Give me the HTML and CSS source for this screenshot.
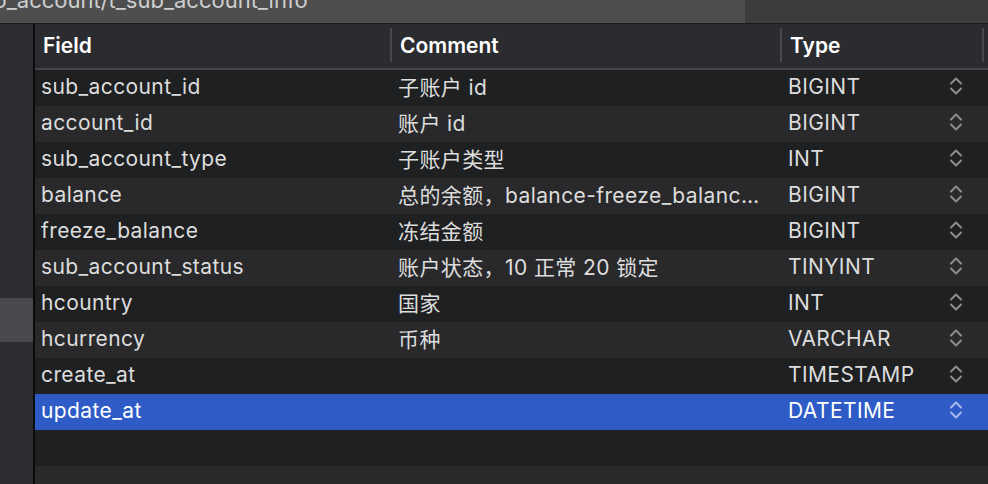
FILE: index.html
```html
<!DOCTYPE html>
<html lang="zh">
<head>
<meta charset="utf-8">
<title>t_sub_account_info</title>
<link rel="stylesheet" href="styles.css">
</head>
<body>
<div class="titlebar">
  <div class="title-left"><span class="title">demo_account/t_sub_account_info</span></div>
  <div class="title-right"></div>
</div>
<div class="main">
  <aside class="sidebar"><div class="side-item"></div></aside>
  <section class="table">
    <div class="thead">
      <div class="th th-first">Field</div>
      <div class="th">Comment</div>
      <div class="th">Type</div>
      <div class="th"></div>
    </div>
    <div class="row odd"><div class="c c1">sub_account_id</div><div class="c c2">子账户 id</div><div class="c c3"><span>BIGINT</span><svg class="step" viewBox="0 0 12 20"><polyline points="1,7.5 6,2.5 11,7.5"/><polyline points="1,12.5 6,17.5 11,12.5"/></svg></div><div></div></div>
    <div class="row even"><div class="c c1">account_id</div><div class="c c2">账户 id</div><div class="c c3"><span>BIGINT</span><svg class="step" viewBox="0 0 12 20"><polyline points="1,7.5 6,2.5 11,7.5"/><polyline points="1,12.5 6,17.5 11,12.5"/></svg></div><div></div></div>
    <div class="row odd"><div class="c c1">sub_account_type</div><div class="c c2">子账户类型</div><div class="c c3"><span>INT</span><svg class="step" viewBox="0 0 12 20"><polyline points="1,7.5 6,2.5 11,7.5"/><polyline points="1,12.5 6,17.5 11,12.5"/></svg></div><div></div></div>
    <div class="row even"><div class="c c1">balance</div><div class="c c2">总的余额，balance-freeze_balanc…</div><div class="c c3"><span>BIGINT</span><svg class="step" viewBox="0 0 12 20"><polyline points="1,7.5 6,2.5 11,7.5"/><polyline points="1,12.5 6,17.5 11,12.5"/></svg></div><div></div></div>
    <div class="row odd"><div class="c c1">freeze_balance</div><div class="c c2">冻结金额</div><div class="c c3"><span>BIGINT</span><svg class="step" viewBox="0 0 12 20"><polyline points="1,7.5 6,2.5 11,7.5"/><polyline points="1,12.5 6,17.5 11,12.5"/></svg></div><div></div></div>
    <div class="row even"><div class="c c1">sub_account_status</div><div class="c c2">账户状态，10 正常 20 锁定</div><div class="c c3"><span>TINYINT</span><svg class="step" viewBox="0 0 12 20"><polyline points="1,7.5 6,2.5 11,7.5"/><polyline points="1,12.5 6,17.5 11,12.5"/></svg></div><div></div></div>
    <div class="row odd"><div class="c c1">hcountry</div><div class="c c2">国家</div><div class="c c3"><span>INT</span><svg class="step" viewBox="0 0 12 20"><polyline points="1,7.5 6,2.5 11,7.5"/><polyline points="1,12.5 6,17.5 11,12.5"/></svg></div><div></div></div>
    <div class="row even"><div class="c c1">hcurrency</div><div class="c c2">币种</div><div class="c c3"><span>VARCHAR</span><svg class="step" viewBox="0 0 12 20"><polyline points="1,7.5 6,2.5 11,7.5"/><polyline points="1,12.5 6,17.5 11,12.5"/></svg></div><div></div></div>
    <div class="row odd"><div class="c c1">create_at</div><div class="c c2"></div><div class="c c3"><span>TIMESTAMP</span><svg class="step" viewBox="0 0 12 20"><polyline points="1,7.5 6,2.5 11,7.5"/><polyline points="1,12.5 6,17.5 11,12.5"/></svg></div><div></div></div>
    <div class="row selected"><div class="c c1">update_at</div><div class="c c2"></div><div class="c c3"><span>DATETIME</span><svg class="step" viewBox="0 0 12 20"><polyline points="1,7.5 6,2.5 11,7.5"/><polyline points="1,12.5 6,17.5 11,12.5"/></svg></div><div></div></div>
    <div class="row odd"></div>
    <div class="row even"></div>
  </section>
</div>
</body>
</html>
```

FILE: styles.css
```css
html, body {
  margin: 0;
  padding: 0;
}
body {
  width: 988px;
  height: 484px;
  overflow: hidden;
  background: #1f2022;
  font-family: Inter, "Noto Sans CJK SC", sans-serif;
  color: #dddddd;
}
.titlebar {
  display: flex;
  height: 23px;
  border-bottom: 1px solid #1b1b1c;
  overflow: hidden;
}
.title-left {
  width: 745px;
  flex: none;
  background: #4e4e4e;
  overflow: hidden;
  white-space: nowrap;
}
.title {
  display: block;
  font-size: 22px;
  line-height: 22px;
  margin-top: -11px;
  margin-left: -52px;
  color: #cfcfcf;
}
.title-right {
  flex: 1;
  background: #3b3b3c;
}
.main {
  display: flex;
  height: 460px;
  overflow: hidden;
}
.sidebar {
  flex: none;
  width: 33px;
  background: #2c2d30;
  border-right: 2px solid #0a0a0a;
  padding-top: 274px;
}
.side-item {
  height: 44px;
  background: #48494c;
}
.table {
  flex: 1;
  min-width: 0;
  display: flex;
  flex-direction: column;
}
.thead {
  flex: none;
  display: grid;
  grid-template-columns: 355px 390px 202px 1fr;
  height: 44px;
  background: #2b2c2f;
  border-bottom: 2px solid #444548;
}
.th {
  margin: 4px 0 6px;
  border-left: 2px solid #47484b;
  padding-left: 8px;
  display: flex;
  align-items: center;
  font-size: 21px;
  font-weight: 600;
  color: #ffffff;
}
.th-first {
  border-left: none;
}
.row {
  box-sizing: border-box;
  display: grid;
  grid-template-columns: 355px 390px 202px 1fr;
  height: 36px;
  padding-bottom: 4px;
  flex: none;
  align-items: center;
  font-size: 21px;
  letter-spacing: 0.4px;
}
.odd {
  background: #1f2022;
}
.even {
  background: #29292c;
}
.selected {
  background: #2e5bc6;
  color: #ffffff;
}
.c {
  white-space: nowrap;
  overflow: hidden;
  text-overflow: ellipsis;
}
.c1 {
  padding-left: 6px;
}
.c2 {
  padding-left: 8px;
  padding-right: 10px;
}
.c3 {
  padding-left: 8px;
  padding-right: 20px;
  display: flex;
  align-items: center;
  justify-content: space-between;
}
.step {
  width: 12px;
  height: 20px;
  fill: none;
  stroke: #8d8d90;
  stroke-width: 2;
  stroke-linecap: round;
  stroke-linejoin: round;
}
.selected .step {
  stroke: #a8b8e8;
}
```
